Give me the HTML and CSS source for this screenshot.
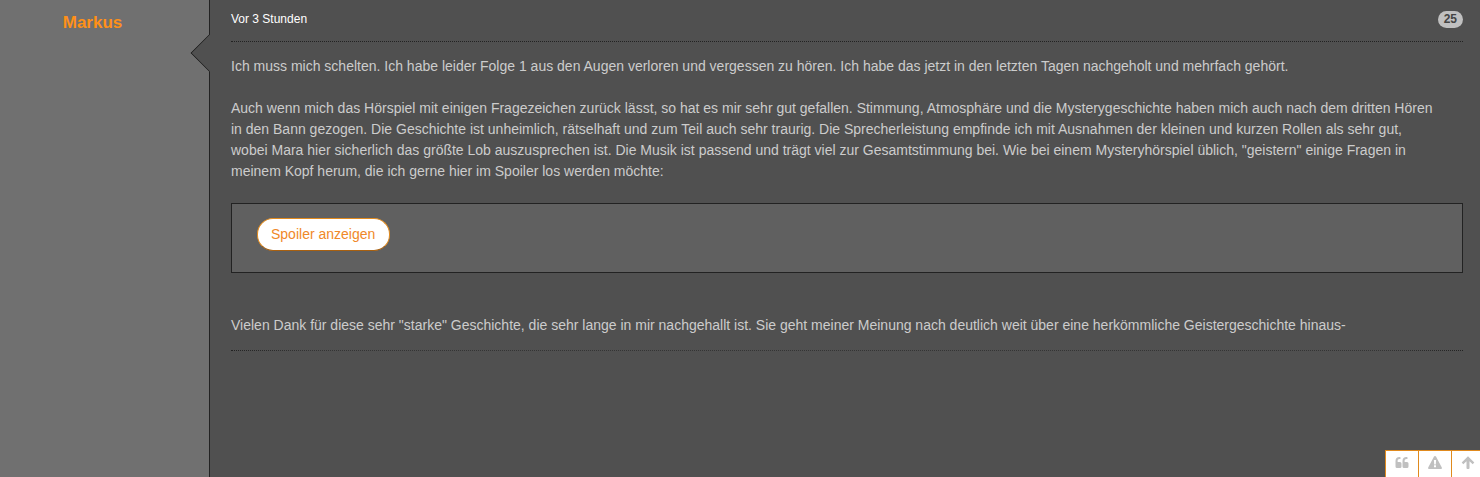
FILE: index.html
```html
<!DOCTYPE html>
<html lang="de">
<head>
    <meta charset="UTF-8">
    <meta name="viewport" content="width=device-width, initial-scale=1.0">
    <title>Beitrag von Markus</title>
    <link rel="stylesheet" href="styles.css">
</head>
<body>
    <article class="message">
        <aside class="message-author">
            <a class="username" href="#">Markus</a>
        </aside>

        <div class="message-content">
            <header class="message-header">
                <time class="message-date">Vor 3 Stunden</time>
                <a class="message-number" href="#">25</a>
            </header>

            <div class="message-text">
                <p>Ich muss mich schelten. Ich habe leider Folge 1 aus den Augen verloren und vergessen zu hören. Ich habe das jetzt in den letzten Tagen nachgeholt und mehrfach gehört.</p>
                <p>Auch wenn mich das Hörspiel mit einigen Fragezeichen zurück lässt, so hat es mir sehr gut gefallen. Stimmung, Atmosphäre und die Mysterygeschichte haben mich auch nach dem dritten Hören in den Bann gezogen. Die Geschichte ist unheimlich, rätselhaft und zum Teil auch sehr traurig. Die Sprecherleistung empfinde ich mit Ausnahmen der kleinen und kurzen Rollen als sehr gut, wobei Mara hier sicherlich das größte Lob auszusprechen ist. Die Musik ist passend und trägt viel zur Gesamtstimmung bei. Wie bei einem Mysteryhörspiel üblich, "geistern" einige Fragen in meinem Kopf herum, die ich gerne hier im Spoiler los werden möchte:</p>

                <div class="spoiler">
                    <button class="spoiler-button" type="button">Spoiler anzeigen</button>
                </div>

                <p>Vielen Dank für diese sehr "starke" Geschichte, die sehr lange in mir nachgehallt ist. Sie geht meiner Meinung nach deutlich weit über eine herkömmliche Geistergeschichte hinaus-</p>
            </div>

            <div class="message-divider"></div>

            <!-- Quote / report / back to top -->
            <nav class="message-buttons">
                <a class="icon-button" href="#" aria-label="Zitieren">
                    <svg width="14" height="13" viewBox="0 0 14 13"><path d="M6.500 7.500V10.500Q6.500 12 5 12H2Q0.500 12 0.500 10.500V5Q0.500 1 4.500 1H5Q5.500 1 5.500 1.500V2.500Q5.500 3 5 3H4.500Q2.500 3 2.500 5V5.300Q2.500 6 3.200 6H5Q6.500 6 6.500 7.500ZM13.500 7.500V10.500Q13.500 12 12 12H9Q7.500 12 7.500 10.500V5Q7.500 1 11.500 1H12Q12.500 1 12.500 1.500V2.500Q12.500 3 12 3H11.500Q9.500 3 9.500 5V5.300Q9.500 6 10.200 6H12Q13.500 6 13.500 7.500Z"/></svg>
                </a>
                <a class="icon-button" href="#" aria-label="Melden">
                    <svg width="14" height="13" viewBox="0 0 14 13"><path fill-rule="evenodd" d="M7 0Q7.600 0 8 0.600L13.800 11.500Q14.300 13 13 13H1Q-0.300 13 0.200 11.500L6 0.600Q6.400 0 7 0ZM5.900 4L6.200 8.500H7.800L8.100 4ZM6 9.300V11.200H8V9.300Z"/></svg>
                </a>
                <a class="icon-button" href="#" aria-label="Zum Seitenanfang">
                    <svg width="14" height="13" viewBox="0 0 14 13"><path d="M7 0.300L13.300 6.600L11.700 8.300L8.500 5.300V12Q8.500 13 7.600 13H6.400Q5.500 13 5.500 12V5.300L2.300 8.300L0.700 6.600Z"/></svg>
                </a>
            </nav>
        </div>
    </article>
</body>
</html>
```

FILE: styles.css
```css
* {
    box-sizing: border-box;
}

body {
    margin: 0;
    font-family: Arial, "Liberation Sans", sans-serif;
    font-size: 14px;
    line-height: 21px;
    color: #ccc;
    background-color: #505050;
}

a {
    text-decoration: none;
}

.message {
    display: flex;
    min-height: 100vh;
    overflow: hidden;
}

.message-author {
    flex: none;
    width: 210px;
    padding: 12px 48px 12px 24px;
    text-align: center;
    background-color: #707070;
    border-right: 1px solid #222;
}

.username {
    display: block;
    color: #ff9018;
    font-size: 17px;
    font-weight: bold;
}

.message-content {
    position: relative;
    flex: 1;
    display: flex;
    flex-direction: column;
    padding: 0 17px 0 21px;
}

/* Arrow pointing at the author */
.message-content::before {
    content: "";
    position: absolute;
    top: 39px;
    left: -14px;
    width: 27px;
    height: 27px;
    background-color: #505050;
    border: solid #222;
    border-width: 0 0 1px 1px;
    transform: rotate(45deg);
    clip-path: polygon(0 0, 100% 100%, 0 100%);
}

.message-header {
    display: flex;
    justify-content: space-between;
    align-items: center;
    height: 42px;
    padding-bottom: 3px;
    border-bottom: 1px dotted #222;
}

.message-date {
    color: #fff;
    font-size: 12px;
}

.message-number {
    padding: 0 6px;
    border-radius: 9px;
    color: #444;
    background-color: #c0c0c0;
    font-size: 12px;
    font-weight: bold;
    line-height: 17px;
}

.message-text {
    padding: 14px 0;
}

.message-text p {
    margin: 0 0 21px;
    padding-right: 24px;
}

.message-text p:last-child {
    margin-bottom: 0;
}

.spoiler {
    min-height: 70px;
    margin-bottom: 42px;
    padding: 14px 25px;
    background-color: #606060;
    border: 1px solid #222;
}

.spoiler-button {
    height: 33px;
    padding: 0 14px 2px 13px;
    border: 1px solid #e08a1e;
    border-bottom-color: #a86010;
    border-radius: 16px;
    color: #f08828;
    background-color: #fff;
    font-family: inherit;
    font-size: 14px;
    cursor: pointer;
}

/* Dotted line, paler between its two ends */
.message-divider {
    border-top: 1px dotted #222;
    mask-image: linear-gradient(to right, #000, rgba(0, 0, 0, 0.6) 80px, rgba(0, 0, 0, 0.6) calc(100% - 80px), #000);
}

.message-buttons {
    display: flex;
    margin: auto -21px 0 auto;
}

.icon-button {
    display: flex;
    justify-content: center;
    width: 33px;
    height: 27px;
    padding-top: 5px;
    background-color: #fff;
    border: solid #e08a1e;
    border-width: 1px 0 0 1px;
}

.icon-button svg {
    flex: none;
    fill: #c0c0c0;
}
```
